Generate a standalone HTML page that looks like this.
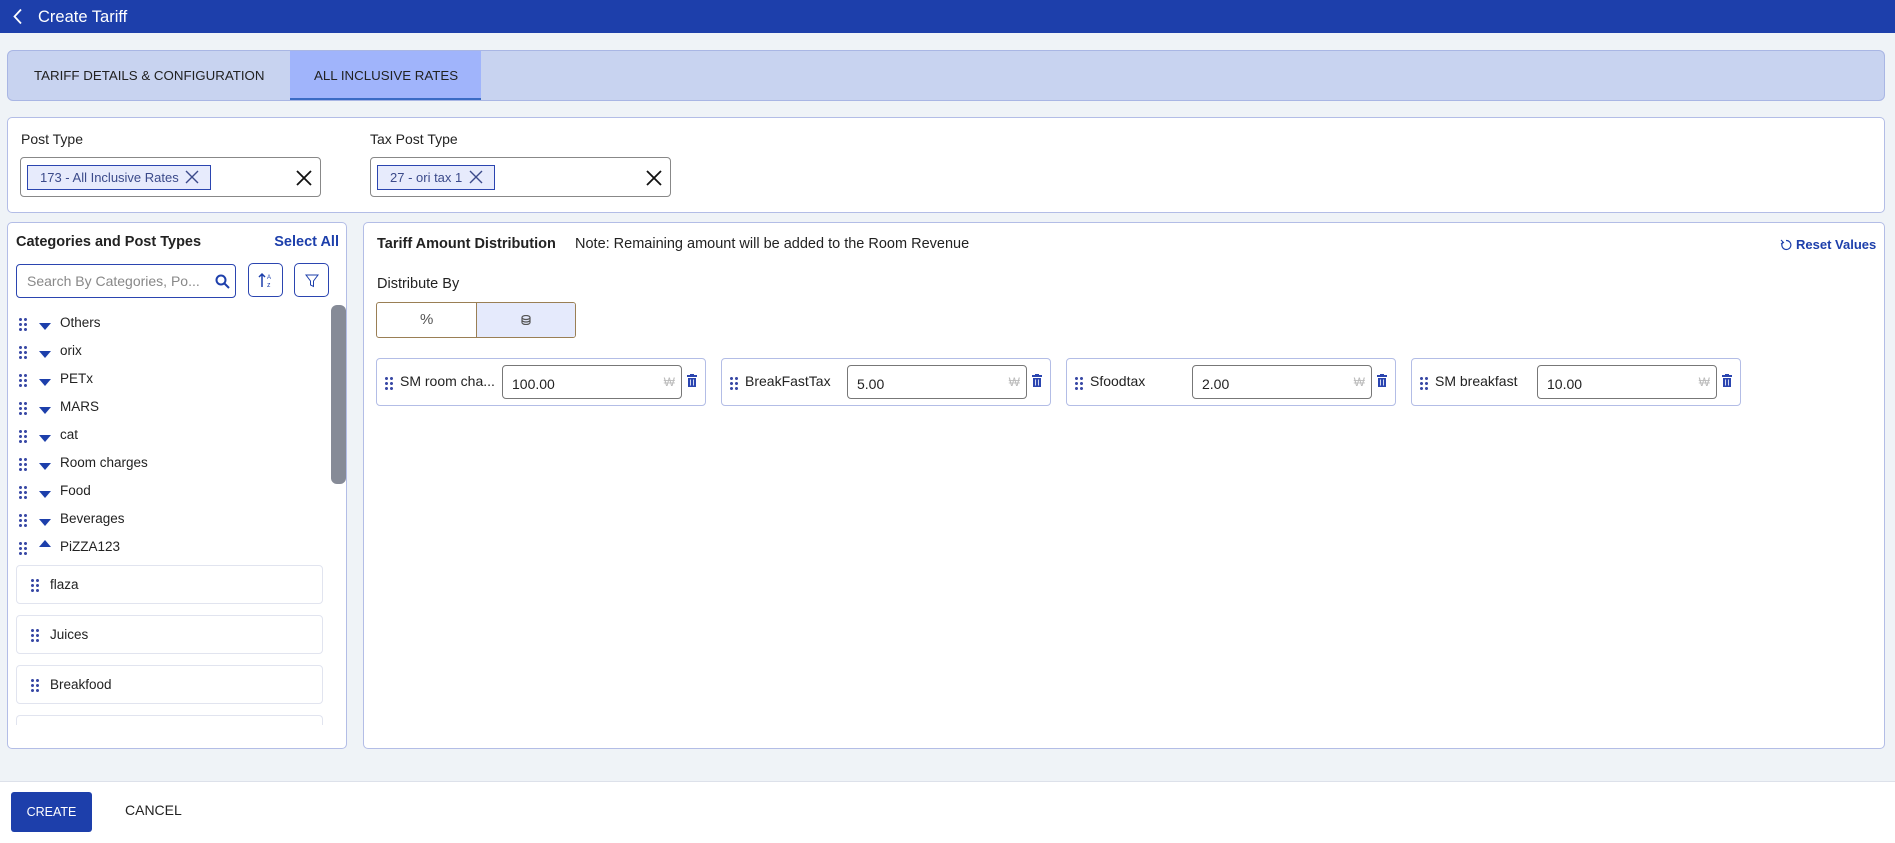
<!DOCTYPE html>
<html><head><meta charset="utf-8"><style>
*{box-sizing:border-box;margin:0;padding:0}
body{width:1895px;height:843px;background:#eff3f7;font-family:"Liberation Sans","DejaVu Sans",sans-serif;color:#222;position:relative;overflow:hidden;font-size:14px}
.a{position:absolute}
.hdr{left:0;top:0;width:1895px;height:33px;background:#1d3fab;color:#fff}
.panel{background:#fff;border:1px solid #b3bde6;border-radius:5px}
.dots{position:absolute;width:10px;height:14px;background-image:radial-gradient(circle,#3a4aa6 1.4px,transparent 1.6px);background-size:5px 5px}
.tri{position:absolute;width:0;height:0;border-left:6px solid transparent;border-right:6px solid transparent;border-top:7px solid #1d3fab}
.trow{position:absolute;left:0;height:28px;width:320px}
.trow span{position:absolute;left:52px;top:4px;font-size:13.5px;color:#222}
.sub{position:absolute;left:16px;width:307px;height:39px;border:1px solid #e1e4ef;border-radius:4px;background:#fff}
.sub span{position:absolute;left:33px;top:11px;font-size:13.5px}
.card{position:absolute;top:358px;width:330px;height:48px;border:1px solid #b3bde6;border-radius:4px;background:#fff}
.card .lbl{position:absolute;left:23px;top:14px;font-size:14px;white-space:nowrap}
.card .inp{position:absolute;left:125px;top:6px;width:180px;height:34px;border:1px solid #777;border-radius:4px}
.card .inp span{position:absolute;left:9px;top:10px;font-size:14px}
.card .inp i{position:absolute;right:6px;top:9px;font-style:normal;color:#bbb;font-size:12px}
.trash{position:absolute;left:310px;top:15px}
</style></head><body>
<div class="a hdr">
<svg class="a" style="left:12px;top:8px" width="12" height="17" viewBox="0 0 12 17"><path d="M9 1.5L2.5 8.5L9 15.5" stroke="#fff" stroke-width="1.8" fill="none"/></svg>
<div class="a" style="left:38px;top:8px;font-size:16.5px;">Create Tariff</div>
</div>

<div class="a" style="left:7px;top:50px;width:1878px;height:51px;background:#c8d3f0;border:1px solid #a9b6e4;border-radius:6px;overflow:hidden">
<div class="a" style="left:26px;top:17px;font-size:13.3px;color:#222">TARIFF DETAILS &amp; CONFIGURATION</div>
<div class="a" style="left:282px;top:0;width:191px;height:50px;background:#a0b4fb;border-bottom:3px solid #3a6bc4"></div>
<div class="a" style="left:306px;top:17px;font-size:13.3px;color:#222">ALL INCLUSIVE RATES</div>
</div>

<div class="a panel" style="left:7px;top:117px;width:1878px;height:96px"></div>
<div class="a" style="left:21px;top:131px;font-size:14px">Post Type</div>
<div class="a" style="left:370px;top:131px;font-size:14px">Tax Post Type</div>
<div class="a" style="left:20px;top:157px;width:301px;height:40px;border:1px solid #888;border-radius:4px;background:#fff">
<div class="a" style="left:6px;top:7px;width:184px;height:25px;border:1px solid #2b45b0;background:#e7ebfc;font-size:13px;color:#3b4a8a;padding:4px 0 0 12px">173 - All Inclusive Rates</div>
<svg class="a" style="left:164px;top:12px" width="14" height="14"><path d="M1 1L13 13M13 1L1 13" stroke="#3b4a8a" stroke-width="1.4"/></svg>
<svg class="a" style="left:275px;top:12px" width="16" height="16"><path d="M1 1L15 15M15 1L1 15" stroke="#111" stroke-width="1.8"/></svg>
</div>
<div class="a" style="left:370px;top:157px;width:301px;height:40px;border:1px solid #888;border-radius:4px;background:#fff">
<div class="a" style="left:6px;top:7px;width:118px;height:25px;border:1px solid #2b45b0;background:#e7ebfc;font-size:13px;color:#3b4a8a;padding:4px 0 0 12px">27 - ori tax 1</div>
<svg class="a" style="left:98px;top:12px" width="14" height="14"><path d="M1 1L13 13M13 1L1 13" stroke="#3b4a8a" stroke-width="1.4"/></svg>
<svg class="a" style="left:275px;top:12px" width="16" height="16"><path d="M1 1L15 15M15 1L1 15" stroke="#111" stroke-width="1.8"/></svg>
</div>

<div class="a panel" style="left:7px;top:222px;width:340px;height:527px;overflow:hidden">
<div class="a" style="left:8px;top:11px;font-size:14.5px;font-weight:bold">Categories and Post Types</div>
<div class="a" style="right:7px;top:11px;font-size:14.5px;font-weight:bold;color:#1d3fab">Select All</div>
<div class="a" style="left:8px;top:41px;width:220px;height:34px;border:1px solid #2b45b0;border-radius:4px">
<div class="a" style="left:10px;top:8px;font-size:14px;color:#888">Search By Categories, Po...</div>
<svg class="a" style="left:198px;top:9px" width="15" height="15"><circle cx="6" cy="6" r="4.5" stroke="#1d3fab" stroke-width="2" fill="none"/><path d="M9.5 9.5L14 14" stroke="#1d3fab" stroke-width="2"/></svg>
</div>
<div class="a" style="left:240px;top:40px;width:35px;height:34px;border:1px solid #2b45b0;border-radius:5px">
<svg class="a" style="left:9px;top:8px" width="16" height="16"><path d="M4 15V2M1 5L4 2L7 5" stroke="#1d3fab" stroke-width="1.5" fill="none"/><text x="9" y="7" font-size="6" fill="#1d3fab" font-family="Liberation Sans">A</text><text x="9" y="15" font-size="7" fill="#1d3fab" font-family="Liberation Sans">z</text></svg>
</div>
<div class="a" style="left:286px;top:40px;width:35px;height:34px;border:1px solid #2b45b0;border-radius:5px">
<svg class="a" style="left:10px;top:10px" width="14" height="14"><path d="M1 1H13L8.5 7V12.5L5.5 11V7Z" stroke="#1d3fab" stroke-width="1" fill="none"/></svg>
</div>
<div class="a" style="left:323px;top:82px;width:15px;height:179px;background:#868b97;border-radius:6px"></div>

<div class="trow" style="top:88px"><div class="dots" style="left:10px;top:6px"></div><div class="tri" style="left:31px;top:12px"></div><span>Others</span></div>
<div class="trow" style="top:116px"><div class="dots" style="left:10px;top:6px"></div><div class="tri" style="left:31px;top:12px"></div><span>orix</span></div>
<div class="trow" style="top:144px"><div class="dots" style="left:10px;top:6px"></div><div class="tri" style="left:31px;top:12px"></div><span>PETx</span></div>
<div class="trow" style="top:172px"><div class="dots" style="left:10px;top:6px"></div><div class="tri" style="left:31px;top:12px"></div><span>MARS</span></div>
<div class="trow" style="top:200px"><div class="dots" style="left:10px;top:6px"></div><div class="tri" style="left:31px;top:12px"></div><span>cat</span></div>
<div class="trow" style="top:228px"><div class="dots" style="left:10px;top:6px"></div><div class="tri" style="left:31px;top:12px"></div><span>Room charges</span></div>
<div class="trow" style="top:256px"><div class="dots" style="left:10px;top:6px"></div><div class="tri" style="left:31px;top:12px"></div><span>Food</span></div>
<div class="trow" style="top:284px"><div class="dots" style="left:10px;top:6px"></div><div class="tri" style="left:31px;top:12px"></div><span>Beverages</span></div>
<div class="trow" style="top:312px"><div class="dots" style="left:10px;top:6px"></div><div class="tri" style="left:31px;top:5px;border-top:0;border-bottom:7px solid #1d3fab"></div><span>PiZZA123</span></div>

<div class="sub" style="left:8px;top:342px"><div class="dots" style="left:13px;top:12px"></div><span>flaza</span></div>
<div class="sub" style="left:8px;top:392px"><div class="dots" style="left:13px;top:12px"></div><span>Juices</span></div>
<div class="sub" style="left:8px;top:442px"><div class="dots" style="left:13px;top:12px"></div><span>Breakfood</span></div>
<div class="a" style="left:8px;top:492px;width:307px;height:10px;border:1px solid #e1e4ef;border-bottom:0;border-radius:4px 4px 0 0"></div>
</div>

<div class="a panel" style="left:363px;top:222px;width:1522px;height:527px"></div>
<div class="a" style="left:377px;top:236px;font-size:14.5px;font-weight:bold">Tariff Amount Distribution</div>
<div class="a" style="left:575px;top:236px;font-size:14.5px">Note: Remaining amount will be added to the Room Revenue</div>
<svg class="a" style="left:1780px;top:239px" width="12" height="12"><path d="M3 3A4.5 4.5 0 1 0 6 1.5" stroke="#1d3fab" stroke-width="1.2" fill="none"/><path d="M1 1L3.5 3.5L1 5" stroke="#1d3fab" stroke-width="1.1" fill="none"/></svg>
<div class="a" style="left:1796px;top:237px;font-size:13px;font-weight:bold;color:#1d3fab">Reset Values</div>
<div class="a" style="left:377px;top:276px;font-size:14.5px">Distribute By</div>
<div class="a" style="left:376px;top:302px;width:200px;height:36px;border:1px solid #9a7f55;border-radius:3px;overflow:hidden">
<div class="a" style="left:99px;top:0;width:100px;height:34px;background:#e5eafc;border-left:1px solid #9a7f55"></div>
<div class="a" style="left:43px;top:8px;font-size:15px;color:#555">%</div>
<svg class="a" style="left:144px;top:12px" width="10" height="10"><ellipse cx="5" cy="2.5" rx="4" ry="2" stroke="#555" fill="none" stroke-width="1.2"/><path d="M1 2.5V7.5A4 2 0 0 0 9 7.5V2.5M1 5A4 2 0 0 0 9 5" stroke="#555" fill="none" stroke-width="1.2"/></svg>
</div>

<div class="card" style="left:376px"><div class="dots" style="left:7px;top:17px"></div><div class="lbl">SM room cha...</div><div class="inp"><span>100.00</span><i>₩</i></div>
<svg class="trash" width="10" height="14"><rect x="0" y="1" width="10" height="2" fill="#2b45b0"/><rect x="3" y="0" width="4" height="2" fill="#2b45b0"/><path d="M1 4H9V13H1Z" fill="#2b45b0"/><path d="M3.5 5.5V11.5M6.5 5.5V11.5" stroke="#fff" stroke-width="0.8"/></svg></div>
<div class="card" style="left:721px"><div class="dots" style="left:7px;top:17px"></div><div class="lbl">BreakFastTax</div><div class="inp"><span>5.00</span><i>₩</i></div>
<svg class="trash" width="10" height="14"><rect x="0" y="1" width="10" height="2" fill="#2b45b0"/><rect x="3" y="0" width="4" height="2" fill="#2b45b0"/><path d="M1 4H9V13H1Z" fill="#2b45b0"/><path d="M3.5 5.5V11.5M6.5 5.5V11.5" stroke="#fff" stroke-width="0.8"/></svg></div>
<div class="card" style="left:1066px"><div class="dots" style="left:7px;top:17px"></div><div class="lbl">Sfoodtax</div><div class="inp"><span>2.00</span><i>₩</i></div>
<svg class="trash" width="10" height="14"><rect x="0" y="1" width="10" height="2" fill="#2b45b0"/><rect x="3" y="0" width="4" height="2" fill="#2b45b0"/><path d="M1 4H9V13H1Z" fill="#2b45b0"/><path d="M3.5 5.5V11.5M6.5 5.5V11.5" stroke="#fff" stroke-width="0.8"/></svg></div>
<div class="card" style="left:1411px"><div class="dots" style="left:7px;top:17px"></div><div class="lbl">SM breakfast</div><div class="inp"><span>10.00</span><i>₩</i></div>
<svg class="trash" width="10" height="14"><rect x="0" y="1" width="10" height="2" fill="#2b45b0"/><rect x="3" y="0" width="4" height="2" fill="#2b45b0"/><path d="M1 4H9V13H1Z" fill="#2b45b0"/><path d="M3.5 5.5V11.5M6.5 5.5V11.5" stroke="#fff" stroke-width="0.8"/></svg></div>

<div class="a" style="left:0;top:781px;width:1895px;height:62px;background:#fff;border-top:1px solid #dde1ea"></div>
<div class="a" style="left:11px;top:792px;width:81px;height:40px;background:#1d3fab;border-radius:3px;color:#fff;font-size:12.5px;text-align:center;line-height:40px">CREATE</div>
<div class="a" style="left:125px;top:802px;font-size:14px;color:#222">CANCEL</div>
</body></html>
